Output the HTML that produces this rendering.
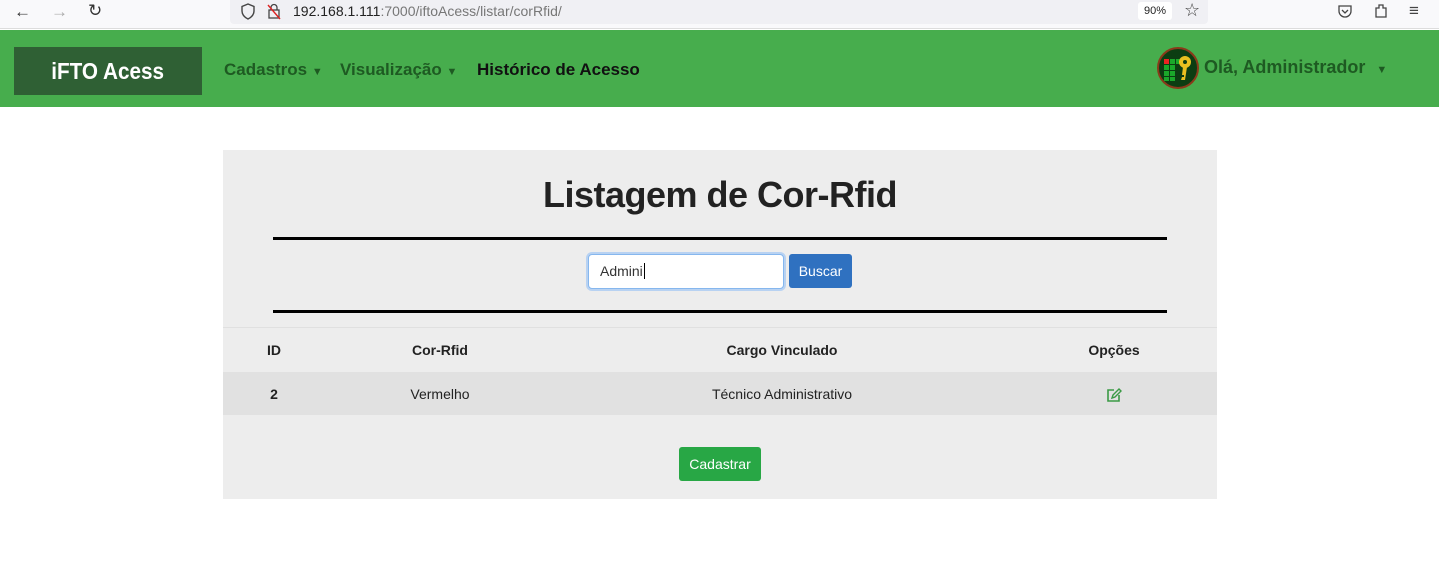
<!DOCTYPE html>
<html><head><meta charset="utf-8"><style>
*{box-sizing:border-box;margin:0;padding:0}
body{width:1439px;height:579px;overflow:hidden;background:#fff;font-family:"Liberation Sans","DejaVu Sans",sans-serif;position:relative}
.chrome{position:absolute;left:0;top:0;width:1439px;height:29px;background:#f9f9fb;border-bottom:1px solid #ddd}
.url{position:absolute;left:230px;top:0;width:978px;height:24px;background:#f0f0f4;border-radius:0 0 4px 4px}
.nav{position:absolute;top:30px;left:0;width:1439px;height:77px;background:#47ad4d}
.abs{position:absolute}
</style></head><body>
<div class="chrome">
 <div class="abs" style="left:14px;top:2px;font-size:17px;color:#333">←</div>
 <div class="abs" style="left:51px;top:2px;font-size:17px;color:#aaa">→</div>
 <div class="abs" style="left:88px;top:1px;font-size:17px;color:#333">↻</div>
 <div class="url">
  <svg class="abs" style="left:10px;top:3px" width="16" height="17"><path d="M8 1L2 3.5V8c0 4 3 6.5 6 8 3-1.5 6-4 6-8V3.5z" fill="none" stroke="#444" stroke-width="1.4"/></svg>
  <svg class="abs" style="left:36px;top:3px" width="16" height="17"><rect x="3" y="7" width="10" height="8" fill="none" stroke="#444" stroke-width="1.3"/><path d="M5 7V4.5a3 3 0 0 1 6 0V7" fill="none" stroke="#444" stroke-width="1.3"/><path d="M2 2l12 14" stroke="#d22" stroke-width="1.4"/></svg>
  <div class="abs" style="left:63px;top:3px;font-size:14px;color:#222">192.168.1.111<span style="color:#777">:7000/iftoAcess/listar/corRfid/</span></div>
  <div class="abs" style="left:908px;top:2px;width:34px;height:18px;background:#fff;border-radius:3px;font-size:11px;line-height:18px;text-align:center;color:#222">90%</div>
  <div class="abs" style="left:954px;top:0px;font-size:18px;color:#444">☆</div>
 </div>
 <svg class="abs" style="left:1337px;top:3px" width="16" height="16"><path d="M2 3h12v5a6 6 0 0 1-12 0z" fill="none" stroke="#444" stroke-width="1.3"/><path d="M5 7l3 3 3-3" fill="none" stroke="#444" stroke-width="1.3"/></svg>
 <svg class="abs" style="left:1373px;top:2px" width="16" height="17"><path d="M3 6h3V3h4v3h3v9H3z" fill="none" stroke="#444" stroke-width="1.3"/></svg>
 <div class="abs" style="left:1409px;top:1px;font-size:17px;color:#444">≡</div>
</div>
<div class="nav">
 <div class="abs" style="left:14px;top:17px;width:188px;height:48px;background:#2f6034;color:#fff;font-weight:bold;font-size:23px;line-height:48px;text-align:center;font-family:'Liberation Sans Narrow','Liberation Sans',sans-serif;transform-origin:center"><span style="display:inline-block;transform:scaleX(0.9)">iFTO Acess</span></div>
 <div class="abs" style="left:224px;top:30px;font-size:17px;font-weight:bold;color:#1e5a22">Cadastros <span style="font-size:11px">▼</span></div>
 <div class="abs" style="left:340px;top:30px;font-size:17px;font-weight:bold;color:#1e5a22">Visualização <span style="font-size:11px">▼</span></div>
 <div class="abs" style="left:477px;top:30px;font-size:17px;font-weight:bold;color:#111">Histórico de Acesso</div>
 <svg class="abs" style="left:1157px;top:17px" width="42" height="42"><circle cx="21" cy="21" r="20" fill="#0c3d12" stroke="#8a3a1a" stroke-width="2"/>
 <g fill="#1aa82a"><rect x="7" y="12" width="5" height="5" fill="#e22"/><rect x="13" y="12" width="5" height="5"/><rect x="19" y="12" width="5" height="5"/><rect x="7" y="18" width="5" height="5"/><rect x="13" y="18" width="5" height="5"/><rect x="7" y="24" width="5" height="5"/><rect x="13" y="24" width="5" height="5"/><rect x="7" y="30" width="5" height="4"/><rect x="13" y="30" width="5" height="4"/></g>
 <circle cx="28" cy="15" r="6" fill="#e8c020"/><circle cx="28" cy="15" r="2" fill="#0c3d12"/><path d="M26 20h4l-2 13h-4l1-3h2l0-2h-2z" fill="#e8c020"/></svg>
 <div class="abs" style="left:1204px;top:27px;font-size:18px;font-weight:bold;color:#1e5a22">Olá, Administrador <span style="font-size:11px;margin-left:6px">▼</span></div>
</div>
<div class="abs" style="left:223px;top:150px;width:994px;height:349px;background:#ededed">
 <div class="abs" style="left:0;top:24px;width:994px;text-align:center;font-size:36px;font-weight:bold;color:#222;letter-spacing:-0.5px">Listagem de Cor-Rfid</div>
 <div class="abs" style="left:50px;top:87px;width:894px;height:3px;background:#000"></div>
 <div class="abs" style="left:365px;top:104px;width:196px;height:35px;background:#fff;border:1px solid #86b7ee;box-shadow:0 0 0 2px #b8d2f2;border-radius:4px;font-size:14px;color:#333;padding:8px 11px">Admini<span style="border-left:1px solid #000;margin-left:1px"></span></div>
 <div class="abs" style="left:566px;top:104px;width:63px;height:34px;background:#2f71c0;border-radius:3px;color:#fff;font-size:14px;line-height:34px;text-align:center">Buscar</div>
 <div class="abs" style="left:50px;top:160px;width:894px;height:3px;background:#000"></div>
 <div class="abs" style="left:0;top:177px;width:994px;height:1px;background:#e0e0e0"></div>
 <div class="abs" style="left:0;top:192px;width:102px;text-align:center;font-size:14px;font-weight:bold;color:#222">ID</div>
 <div class="abs" style="left:167px;top:192px;width:100px;text-align:center;font-size:14px;font-weight:bold;color:#222">Cor-Rfid</div>
 <div class="abs" style="left:409px;top:192px;width:300px;text-align:center;font-size:14px;font-weight:bold;color:#222">Cargo Vinculado</div>
 <div class="abs" style="left:841px;top:192px;width:100px;text-align:center;font-size:14px;font-weight:bold;color:#222">Opções</div>
 <div class="abs" style="left:0;top:222px;width:994px;height:43px;background:#e1e1e1">
  <div class="abs" style="left:0;top:14px;width:102px;text-align:center;font-size:14px;font-weight:bold;color:#222">2</div>
  <div class="abs" style="left:167px;top:14px;width:100px;text-align:center;font-size:14px;color:#222">Vermelho</div>
  <div class="abs" style="left:409px;top:14px;width:300px;text-align:center;font-size:14px;color:#222">Técnico Administrativo</div>
  <svg class="abs" style="left:883px;top:15px" width="16" height="16"><path d="M8 3H2v11h11V8" fill="none" stroke="#3a9a45" stroke-width="1.6"/><path d="M6 11l1-3 6-6 2 2-6 6z" fill="none" stroke="#3a9a45" stroke-width="1.4"/></svg>
 </div>
 <div class="abs" style="left:456px;top:297px;width:82px;height:34px;background:#28a745;border-radius:3px;color:#fff;font-size:14px;line-height:34px;text-align:center">Cadastrar</div>
</div>
</body></html>
